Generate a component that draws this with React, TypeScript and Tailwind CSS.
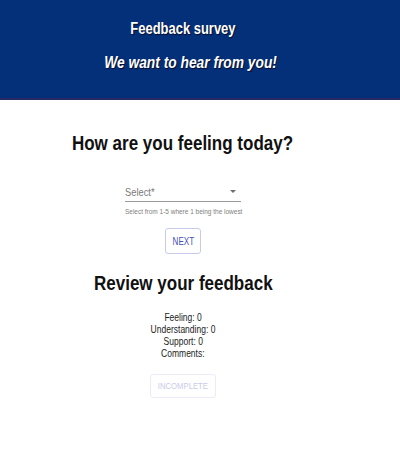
import React from "react";

const font = "font-['Liberation_Sans',Arial,sans-serif]";

// the survey is rendered slightly condensed; squeeze text horizontally
function Sx({ children, className = "" }: { children: React.ReactNode; className?: string }) {
  return <span className={`inline-block whitespace-nowrap scale-x-[0.81] ${className}`}>{children}</span>;
}

export default function App() {
  const [feeling] = React.useState(0);
  const [understanding] = React.useState(0);
  const [support] = React.useState(0);

  return (
    <div className={`min-h-[459px] w-[400px] bg-white ${font}`}>
      {/* Header */}
      <header className="h-[100px] bg-[#04307a] border-b-2 border-[#2a2a62]">
        <div className="w-[366px] flex flex-col items-center text-white [text-shadow:1px_1px_1px_#0a0a2a]">
          <h1 className="mt-[19px] text-[16px] leading-[20px] font-bold">
            <Sx>Feedback survey</Sx>
          </h1>
          <p className="mt-[14px] pl-[15px] text-[17px] leading-[20px] font-bold italic">
            <Sx>We want to hear from you!</Sx>
          </p>
        </div>
      </header>

      <main className="w-[366px] flex flex-col items-center text-[#111]">
        <h2 className="mt-[31px] text-[21px] leading-[24px] font-bold">
          <Sx>How are you feeling today?</Sx>
        </h2>

        {/* Select */}
        <div className="mt-[27px] w-[116px]">
          <div className="h-[20px] flex items-center justify-between border-b border-[#9a9a9a]">
            <span className="text-[11.5px] leading-[16px] text-[#7a7a7a]">
              <Sx className="origin-left">Select*</Sx>
            </span>
            <svg width="6" height="3" viewBox="0 0 6 3" className="mr-[5px]">
              <path d="M0 0h6L3 3z" fill="#6f6f6f" />
            </svg>
          </div>
          <p className="mt-[4px] text-[8px] leading-[12px] text-[#808080]">
            <Sx className="origin-left">Select from 1-5 where 1 being the lowest</Sx>
          </p>
        </div>

        <button className="mt-[10px] w-[36px] h-[26px] rounded-[3px] border border-[#c7cbe9] text-[10px] text-[#3f51b5] flex items-center justify-center">
          <Sx>NEXT</Sx>
        </button>

        <h2 className="mt-[17px] text-[21px] leading-[24px] font-bold">
          <Sx>Review your feedback</Sx>
        </h2>

        <div className="mt-[16px] flex flex-col items-center text-[10.5px] leading-[12px] text-[#222]">
          <Sx>Feeling: {feeling}</Sx>
          <Sx>Understanding: {understanding}</Sx>
          <Sx>Support: {support}</Sx>
          <Sx>Comments:</Sx>
        </div>

        <button
          disabled
          className="mt-[15px] w-[66px] h-[24px] rounded-[3px] border border-[#ececf8] text-[9.5px] text-[#c9cbe8] flex items-center justify-center"
        >
          <Sx>INCOMPLETE</Sx>
        </button>
      </main>
    </div>
  );
}
